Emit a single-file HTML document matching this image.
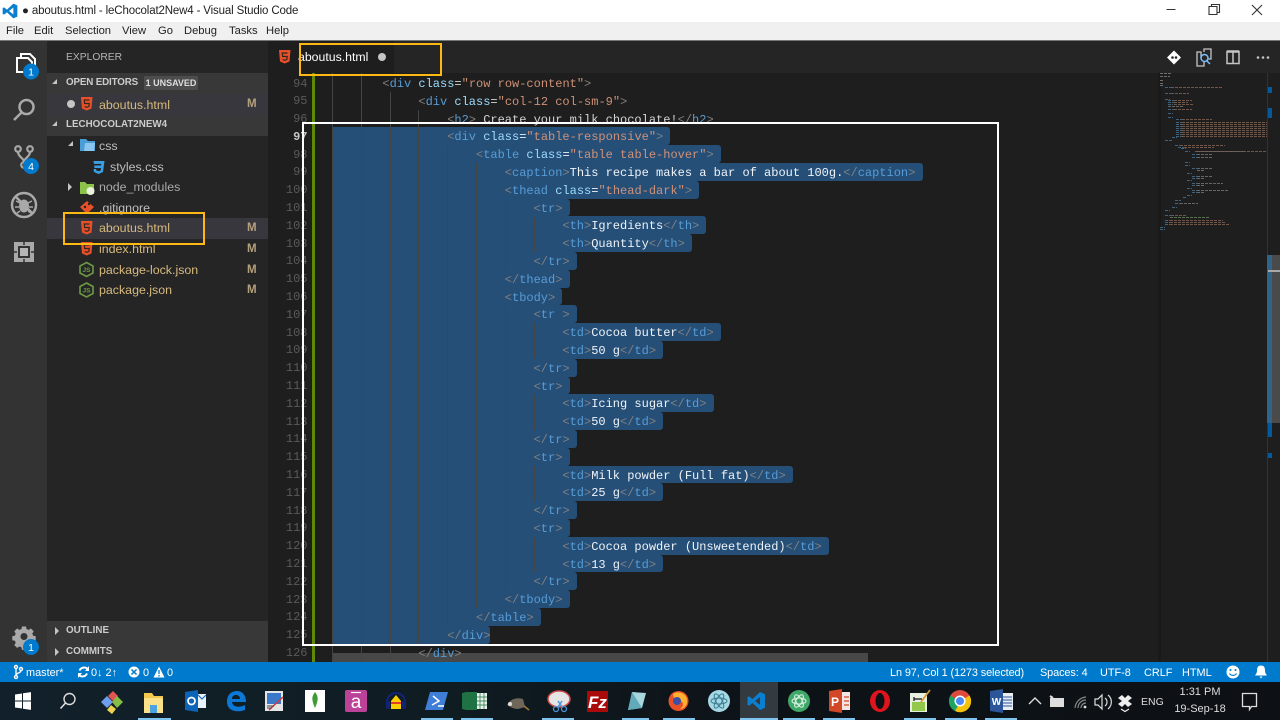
<!DOCTYPE html>
<html lang="en"><head><meta charset="utf-8"><title>aboutus.html - leChocolat2New4 - Visual Studio Code</title>
<style>
html,body{margin:0;padding:0;width:1280px;height:720px;overflow:hidden;background:#1e1e1e}
body{position:relative;font-family:"Liberation Sans",sans-serif}
.a{position:absolute;white-space:pre}
.m{top:24px;font-size:11.2px;color:#222;line-height:14px}
.h{left:47px;width:221px;height:20.5px;background:#383838}
.ht{font-size:9.8px;font-weight:bold;color:#ccc;line-height:14px}
.f{font-size:12.4px;line-height:16px;color:#d7ba7d}
.n{color:#c0c0c0}
.M{left:247px;font-size:11.5px;font-weight:bold;color:#b5a07c;line-height:14px}
.sb{top:666px;font-size:10.9px;color:#fff;line-height:14px}
#code{position:absolute;left:332px;top:74.1px;font:12px/20.6px "Liberation Mono",monospace;color:#d4d4d4}
.l{height:17.8px;white-space:pre;width:fit-content}
.s{background:#264f78;padding-right:7.2px;border-radius:0 3px 3px 0;color:#eef3f8}
.i3{padding-left:86.4px}.i4{padding-left:115.2px}.i5{padding-left:144px}.i6{padding-left:172.8px}.i7{padding-left:201.6px}.i8{padding-left:230.4px}
#code b,#code i,#code em,#code u{font-weight:normal;font-style:normal;text-decoration:none}
#code b{color:#808080}#code i{color:#569cd6}#code em{color:#9cdcfe}#code u{color:#ce9178}
#nums{position:absolute;left:268px;top:75.5px;width:39.5px;text-align:right;font:12px/17.8px "Liberation Mono",monospace;color:#5a5a5a}
.g{position:absolute;width:1px;background:#444}
</style></head><body>

<!-- title + menu -->
<div class="a" style="left:0;top:0;width:1280px;height:22px;background:#fff"></div>
<div class="a" style="left:0;top:22px;width:1280px;height:18px;background:#f0f0f0"></div>
<div class="a" style="left:0;top:40px;width:1280px;height:1px;background:#777"></div>
<svg class="a" style="left:2px;top:3px" width="16" height="16" viewBox="0 0 24 24"><path d="M17 1 7.500 10 3 6.500 1 7.500v9L3 17.500 7.500 14 17 23l6-2.500V3.500Z" fill="#0a7fd0"/><path d="M17 7 10.500 12 17 17Z" fill="#fff"/></svg>
<div class="a" style="left:22px;top:4px;font-size:11.5px;letter-spacing:-.15px;line-height:14px;color:#222">● aboutus.html - leChocolat2New4 - Visual Studio Code</div>
<div class="a m" style="left:6px">File</div><div class="a m" style="left:34px">Edit</div><div class="a m" style="left:65px">Selection</div><div class="a m" style="left:122px">View</div><div class="a m" style="left:158px">Go</div><div class="a m" style="left:184px">Debug</div><div class="a m" style="left:229px">Tasks</div><div class="a m" style="left:266px">Help</div>
<svg class="a" style="left:1160px;top:0" width="120" height="22" fill="none" stroke="#333" stroke-width="1"><path d="M6.500 9.500h9"/><path d="M49 6.500h8v8h-8zM51.500 6.500v-2h8v8h-2.500" stroke-width="1.100"/><path d="M92 5l10 10M102 5 92 15" stroke-width="1.100"/></svg>

<!-- activity bar -->
<div class="a" style="left:0;top:41px;width:47px;height:621px;background:#333"></div>
<svg class="a" style="left:0;top:41px" width="47" height="621" fill="none">
<g stroke="#fff" stroke-width="2"><path d="M17 17h11l4 4v10H17z" fill="#333"/><path d="M21 17v-4h9l5 5v12h-3"/></g>
<circle cx="31" cy="30.500" r="8" fill="#007acc"/><text x="31" y="34.500" font-family="Liberation Sans" font-size="10.500" fill="#fff" text-anchor="middle">1</text>
<g stroke="#a9a9a9" stroke-width="2.500"><circle cx="26.500" cy="66" r="7"/><path d="M21.500 71.500 14 79"/></g>
<g stroke="#a9a9a9" stroke-width="2.200"><circle cx="18" cy="108" r="2.800"/><circle cx="30" cy="108" r="2.800"/><circle cx="24" cy="124" r="2.800"/><path d="M18 111c0 5 6 6 6 10M30 111c0 5-6 6-6 10"/></g>
<circle cx="31" cy="125" r="8" fill="#007acc"/><text x="31" y="129" font-family="Liberation Sans" font-size="10.500" fill="#fff" text-anchor="middle">4</text>
<g stroke="#a9a9a9"><circle cx="24" cy="164" r="12" stroke-width="2.500"/><path d="M15.500 155.500 32.500 172.500" stroke-width="2.500"/><ellipse cx="24" cy="165" rx="5" ry="6.500" fill="#a9a9a9" stroke="none"/><path d="M16 160l4 2M32 160l-4 2M15 166h4M33 166h-4M17 172l3-2M31 172l-3-2" stroke-width="1.500"/></g>
<rect x="14" y="201" width="20" height="20" fill="#a9a9a9"/><rect x="18" y="205" width="12" height="12" fill="#333"/><rect x="20" y="207" width="8" height="8" fill="#b5b5b5"/><path d="M24 201v3M24 218v3M14 211h3M31 211h3" stroke="#333" stroke-width="1.500"/>
<g fill="#a9a9a9"><path d="M22 585.500h4l.6 2.600 2 .8 2.300-1.400 2.800 2.800-1.400 2.300.8 2 2.600.6v4l-2.600.6-.8 2 1.400 2.300-2.800 2.800-2.300-1.400-2 .8-.6 2.600h-4l-.6-2.600-2-.8-2.300 1.400-2.800-2.800 1.400-2.300-.8-2-2.600-.6v-4l2.600-.6.8-2-1.400-2.300 2.800-2.800 2.300 1.400 2-.8z"/></g><circle cx="24" cy="595.500" r="3.500" fill="#333"/>
<circle cx="31" cy="606" r="8" fill="#007acc"/><text x="31" y="610" font-family="Liberation Sans" font-size="10.500" fill="#fff" text-anchor="middle">1</text>
</svg>

<!-- sidebar -->
<div class="a" style="left:47px;top:41px;width:221px;height:621px;background:#252526"></div>
<div class="a" style="left:66px;top:51px;font-size:10.300px;line-height:14px;color:#b4b4b4">EXPLORER</div>
<div class="a h" style="top:73px"></div>
<div class="a ht" style="left:66px;top:76px;letter-spacing:-.15px">OPEN EDITORS</div>
<div class="a" style="left:144px;top:76px;width:54px;height:14px;background:#4d4d4d;border-radius:1px;color:#ddd;font-size:9px;font-weight:bold;line-height:14px;text-align:center">1 UNSAVED</div>
<div class="a" style="left:47px;top:94px;width:221px;height:20.500px;background:#37373d"></div>
<div class="a" style="left:67px;top:100px;width:8px;height:8px;border-radius:4px;background:#c5c5c5"></div>
<div class="a f" style="left:99px;top:96.500px">aboutus.html</div><div class="a M" style="top:97px">M</div>
<div class="a h" style="top:115px"></div>
<div class="a ht" style="left:66px;top:118px">LECHOCOLAT2NEW4</div>
<div class="a" style="left:47px;top:217.500px;width:221px;height:21px;background:#37373d"></div>
<div class="a f n" style="left:99px;top:137.500px;color:#bdbdbd">css</div>
<div class="a f n" style="left:110px;top:158.500px;color:#bdbdbd">styles.css</div>
<div class="a f n" style="left:99px;top:179px;color:#a9a9a9">node_modules</div>
<div class="a f n" style="left:99px;top:199.500px;color:#bdbdbd">.gitignore</div>
<div class="a f" style="left:99px;top:220px">aboutus.html</div><div class="a M" style="top:221px">M</div>
<div class="a f" style="left:99px;top:241px">index.html</div><div class="a M" style="top:242px">M</div>
<div class="a f" style="left:99px;top:261.500px">package-lock.json</div><div class="a M" style="top:262.500px">M</div>
<div class="a f" style="left:99px;top:282px">package.json</div><div class="a M" style="top:283px">M</div>
<div class="a h" style="top:620.500px"></div><div class="a h" style="top:641px"></div>
<div class="a ht" style="left:66px;top:624px">OUTLINE</div>
<div class="a ht" style="left:66px;top:645px">COMMITS</div>
<svg class="a" style="left:47px;top:41px" width="221" height="621">
<defs><g id="h5"><path d="M0 0h11.500l-1 11.500L5.750 13.500 1 11.500z" fill="#e8502a"/><path d="M8.500 3H3.300l.3 3.500h4.600l-.3 3-2.150.8-2.150-.8" fill="none" stroke="#33261f" stroke-width="1.200"/></g>
<g id="njs"><path d="M6.500 0 13 3.500v7L6.500 14 0 10.500v-7z" fill="none" stroke="#6d9b44" stroke-width="1.600"/><text x="6.500" y="9.500" font-family="Liberation Sans" font-size="6.500" font-weight="bold" fill="#6d9b44" text-anchor="middle">JS</text></g></defs>
<path d="M10 38l-5 5h5zM10 80l-5 5h5zM26 100l-5 5h5z" fill="#c5c5c5"/>
<path d="M21 142l4 4-4 4z" fill="#c5c5c5"/>
<path d="M8 586l4 4-4 4zM8 607l4 4-4 4z" fill="#c5c5c5"/>
<use href="#h5" x="34" y="56"/>
<use href="#h5" x="34" y="180"/><use href="#h5" x="34" y="201"/>
<use href="#njs" x="33" y="221.500"/><use href="#njs" x="33" y="242"/>
<path d="M33 98h6l2 2h7v10H33z" fill="#4a9ed8"/><path d="M38 102h10l-1 8H37z" fill="#8cc6ee"/>
<path d="M46.500 120h11l-1.500 11-4.500 2-4.500-2-.4-3h2.500l.2 1.500 2.200.7 2.200-.7.300-2.500H47.500l-.3-2.500h6.800l.3-1.600h-7.400z" fill="#39a0e5"/>
<path d="M33 141h5l2 2h7v10H33z" fill="#8bc34a"/><circle cx="43.500" cy="150" r="4" fill="#e8f2dc"/>
<path d="M33 166l7-6 7 6-7 7z" fill="#e8502a"/><circle cx="38" cy="166" r="1.200" fill="#252526"/><circle cx="42" cy="163" r="1.200" fill="#252526"/>
</svg>

<!-- tabs -->
<div class="a" style="left:268px;top:41px;width:1012px;height:32px;background:#252526"></div>
<div class="a" style="left:268px;top:41px;width:126px;height:32px;background:#1e1e1e"></div>
<svg class="a" style="left:279px;top:50px" width="12" height="14"><use href="#h5"/></svg>
<div class="a" style="left:298px;top:50px;font-size:12.300px;line-height:15px;color:#fff">aboutus.html</div>
<div class="a" style="left:378px;top:53px;width:8px;height:8px;border-radius:4px;background:#c5c5c5"></div>
<svg class="a" style="left:1160px;top:41px" width="120" height="32" fill="none">
<path d="M14 9.500l7 7-7 7-7-7z" fill="#fff"/><circle cx="12.500" cy="16.500" r="1.300" fill="#252526"/><circle cx="16" cy="16.500" r="1.300" fill="#252526"/>
<g stroke="#c5c5c5" stroke-width="1.300"><path d="M41 17v-6h-4v14h7v-4"/><path d="M44 11V8h7v10h-3"/></g><circle cx="44.500" cy="17" r="3.500" stroke="#75beff" stroke-width="1.500"/><path d="M47 20l3 3" stroke="#75beff" stroke-width="1.500"/>
<path d="M67 10.500h12v12H67zM73 10.500v12" stroke="#c5c5c5" stroke-width="1.500"/><path d="M67 10.500h12" stroke="#c5c5c5" stroke-width="2.500"/>
<circle cx="98" cy="16.500" r="1.300" fill="#c5c5c5"/><circle cx="103" cy="16.500" r="1.300" fill="#c5c5c5"/><circle cx="108" cy="16.500" r="1.300" fill="#c5c5c5"/>
</svg>

<!-- editor -->
<div class="a" style="left:312px;top:73px;width:3px;height:589px;background:#5f8a06"></div>
<div id="nums">94<br>95<br>96<br><span style="color:#c6c6c6;font-weight:bold">97</span><br>98<br>99<br>100<br>101<br>102<br>103<br>104<br>105<br>106<br>107<br>108<br>109<br>110<br>111<br>112<br>113<br>114<br>115<br>116<br>117<br>118<br>119<br>120<br>121<br>122<br>123<br>124<br>125<br>126</div>

<div class="a" style="left:332px;top:653px;width:536px;height:9px;background:#484848"></div>

<div id="code">
<div class="l" style="padding-left:50.400px"><b>&lt;</b><i>div</i> <em>class</em>=<u>"row row-content"</u><b>&gt;</b></div>
<div class="l i3"><b>&lt;</b><i>div</i> <em>class</em>=<u>"col-12 col-sm-9"</u><b>&gt;</b></div>
<div class="l i4"><b>&lt;</b><i>h2</i><b>&gt;</b> Create your milk chocolate!<b>&lt;/</b><i>h2</i><b>&gt;</b></div>
<div class="l s i4"><b>&lt;</b><i>div</i> <em>class</em>=<u>"table-responsive"</u><b>&gt;</b></div>
<div class="l s i5"><b>&lt;</b><i>table</i> <em>class</em>=<u>"table table-hover"</u><b>&gt;</b></div>
<div class="l s i6"><b>&lt;</b><i>caption</i><b>&gt;</b>This recipe makes a bar of about 100g.<b>&lt;/</b><i>caption</i><b>&gt;</b></div>
<div class="l s i6"><b>&lt;</b><i>thead</i> <em>class</em>=<u>"thead-dark"</u><b>&gt;</b></div>
<div class="l s i7"><b>&lt;</b><i>tr</i><b>&gt;</b></div>
<div class="l s i8"><b>&lt;</b><i>th</i><b>&gt;</b>Igredients<b>&lt;/</b><i>th</i><b>&gt;</b></div>
<div class="l s i8"><b>&lt;</b><i>th</i><b>&gt;</b>Quantity<b>&lt;/</b><i>th</i><b>&gt;</b></div>
<div class="l s i7"><b>&lt;/</b><i>tr</i><b>&gt;</b></div>
<div class="l s i6"><b>&lt;/</b><i>thead</i><b>&gt;</b></div>
<div class="l s i6"><b>&lt;</b><i>tbody</i><b>&gt;</b></div>
<div class="l s i7"><b>&lt;</b><i>tr</i> <b>&gt;</b></div>
<div class="l s i8"><b>&lt;</b><i>td</i><b>&gt;</b>Cocoa butter<b>&lt;/</b><i>td</i><b>&gt;</b></div>
<div class="l s i8"><b>&lt;</b><i>td</i><b>&gt;</b>50 g<b>&lt;/</b><i>td</i><b>&gt;</b></div>
<div class="l s i7"><b>&lt;/</b><i>tr</i><b>&gt;</b></div>
<div class="l s i7"><b>&lt;</b><i>tr</i><b>&gt;</b></div>
<div class="l s i8"><b>&lt;</b><i>td</i><b>&gt;</b>Icing sugar<b>&lt;/</b><i>td</i><b>&gt;</b></div>
<div class="l s i8"><b>&lt;</b><i>td</i><b>&gt;</b>50 g<b>&lt;/</b><i>td</i><b>&gt;</b></div>
<div class="l s i7"><b>&lt;/</b><i>tr</i><b>&gt;</b></div>
<div class="l s i7"><b>&lt;</b><i>tr</i><b>&gt;</b></div>
<div class="l s i8"><b>&lt;</b><i>td</i><b>&gt;</b>Milk powder (Full fat)<b>&lt;/</b><i>td</i><b>&gt;</b></div>
<div class="l s i8"><b>&lt;</b><i>td</i><b>&gt;</b>25 g<b>&lt;/</b><i>td</i><b>&gt;</b></div>
<div class="l s i7"><b>&lt;/</b><i>tr</i><b>&gt;</b></div>
<div class="l s i7"><b>&lt;</b><i>tr</i><b>&gt;</b></div>
<div class="l s i8"><b>&lt;</b><i>td</i><b>&gt;</b>Cocoa powder (Unsweetended)<b>&lt;/</b><i>td</i><b>&gt;</b></div>
<div class="l s i8"><b>&lt;</b><i>td</i><b>&gt;</b>13 g<b>&lt;/</b><i>td</i><b>&gt;</b></div>
<div class="l s i7"><b>&lt;/</b><i>tr</i><b>&gt;</b></div>
<div class="l s i6"><b>&lt;/</b><i>tbody</i><b>&gt;</b></div>
<div class="l s i5"><b>&lt;/</b><i>table</i><b>&gt;</b></div>
<div class="l s i4" style="padding-right:0"><b>&lt;/</b><i>div</i><b>&gt;</b></div>
<div class="l i3"><b>&lt;/</b><i>div</i><b>&gt;</b></div>
</div>

<!-- indent guides -->
<div class="g" style="left:332px;top:73px;height:589px"></div>
<div class="g" style="left:361px;top:73px;height:589px"></div>
<div class="g" style="left:390px;top:92px;height:570px"></div>
<div class="g" style="left:418px;top:110px;height:535px"></div>
<div class="g" style="left:447px;top:145.300px;height:480.600px"></div>
<div class="g" style="left:476px;top:163px;height:445px"></div>
<div class="g" style="left:505px;top:198.700px;height:71.200px"></div>
<div class="g" style="left:505px;top:305.500px;height:284.500px"></div>
<div class="g" style="left:534px;top:216.500px;height:35.600px"></div>
<div class="g" style="left:534px;top:323.300px;height:35.600px"></div>
<div class="g" style="left:534px;top:394.500px;height:35.600px"></div>
<div class="g" style="left:534px;top:465.700px;height:35.600px"></div>
<div class="g" style="left:534px;top:536.900px;height:35.600px"></div>

<!-- minimap -->
<div class="a" style="left:1158px;top:73px;width:3px;height:589px;background:#191919"></div>
<svg class="a" style="left:1160px;top:73px" width="107" height="160" fill="none" stroke-width="1" opacity=".75" stroke-dasharray="3 1">
<path stroke="#8a8a8a" d="M0 .5h12M0 3.500h10M0 7.500h4M0 10.500h3M0 12.500h4"/>
<path stroke="#4a7ba0" d="M5 14.500h6M5 20.500h6M5 26.500h5M8 27.500h6M8 29.500h6M8 31.500h5M8 36.500h6M8 40.500h5M8 44.500h5M16 46.500h6M16 49.500h6M16 51.500h6M16 53.500h6M16 55.500h6M16 57.500h6M16 59.500h6M16 61.500h6M16 63.500h6M12 64.500h5M5 67.500h8M15 72.500h5M18 74.500h6M21 75.500h5M25 78.500h5M32 81.500h5M32 84.500h5M25 89.500h5M25 92.500h5M32 95.500h5M27 100.500h5M32 103.500h5M32 105.500h5M27 107.500h5M32 110.500h5M32 112.500h5M27 115.500h5M32 117.500h5M32 119.500h5M27 122.500h5M23 124.500h4M15 127.500h6M15 130.500h5M12 134.500h5M5 137.500h5M5 142.500h6M10 144.500h4M5 147.500h5M5 149.500h5M5 151.500h5M0 154.500h5M0 156.500h5"/>
<path stroke="#8d6a58" d="M11 14.500h52M11 20.500h18M14 27.500h18M14 29.500h14M14 31.500h20M14 36.500h18M22 46.500h30M22 49.500h85M22 51.500h85M22 53.500h85M22 55.500h85M22 57.500h85M22 59.500h85M22 61.500h85M22 63.500h85M20 72.500h45M24 74.500h30M35 78.500h75M11 142.500h15"/>
<path stroke="#7d7d7d" d="M8 33.500h15M30 75.500h0M37 78.500h48M37 81.500h16M37 84.500h16M37 95.500h16M37 97.500h8M37 103.500h16M37 105.500h8M37 110.500h26M37 112.500h8M37 117.500h31M37 119.500h8M20 130.500h18"/>
<path stroke="#6a8f5a" d="M10 144.500h40"/>
<path stroke="#8d6a58" d="M10 147.500h53M10 149.500h56M10 151.500h60"/>
</svg>
<div class="a" style="left:1267px;top:73px;width:1px;height:589px;background:#333"></div>
<div class="a" style="left:1268px;top:255px;width:12px;height:168px;background:#4a4a4a"></div>
<div class="a" style="left:1267px;top:255px;width:5px;height:168px;background:#31648a"></div>
<div class="a" style="left:1268px;top:270px;width:12px;height:2px;background:#a8a8a8"></div>
<div class="a" style="left:1268px;top:87px;width:4px;height:6px;background:#04599a"></div>
<div class="a" style="left:1268px;top:108px;width:4px;height:10px;background:#04599a"></div>
<div class="a" style="left:1268px;top:423px;width:4px;height:14px;background:#04599a"></div>
<div class="a" style="left:1268px;top:453px;width:4px;height:5px;background:#04599a"></div>

<!-- annotation rectangles -->
<div class="a" style="left:302px;top:122px;width:693px;height:520px;border:2px solid #fff"></div>
<div class="a" style="left:299px;top:43px;width:138.500px;height:29px;border:2px solid #fdb913"></div>
<div class="a" style="left:63px;top:212px;width:138px;height:28.500px;border:2px solid #fdb913"></div>

<!-- status bar -->
<div class="a" style="left:0;top:662px;width:1280px;height:20px;background:#007acc"></div>
<svg class="a" style="left:0;top:662px" width="1280" height="20" fill="none" stroke="#fff">
<g stroke-width="1.400"><circle cx="16" cy="5" r="1.500"/><circle cx="16" cy="15" r="1.500"/><circle cx="21" cy="7" r="1.500"/><path d="M16 6.500v7M21 8.500c0 3-5 2-5 5"/></g>
<path d="M88 7.500a5 5 0 0 0-8.500 1M78.500 12.500a5 5 0 0 0 8.500-1" stroke-width="2"/><path d="M89 4v5h-4zM78 16v-5h4z" fill="#fff" stroke="none"/>
<circle cx="134" cy="10" r="5.500" fill="#fff" stroke="none"/><path d="M131.500 7.500l5 5M136.500 7.500l-5 5" stroke="#007acc" stroke-width="1.500"/>
<path d="M159 4.500l5.500 11h-11z" fill="#fff" stroke="none"/><path d="M159 8v4M159 13v1.500" stroke="#007acc" stroke-width="1.300"/>
<circle cx="1233" cy="10" r="6.500" fill="#fff" stroke="none"/><circle cx="1230.500" cy="8" r="1" fill="#007acc" stroke="none"/><circle cx="1235.500" cy="8" r="1" fill="#007acc" stroke="none"/><path d="M1229.500 11.500c1.500 2.500 5.500 2.500 7 0" stroke="#007acc" stroke-width="1.200"/>
<path d="M1261 3.500c-3 0-4 2-4 5 0 3-1.500 4-2 5h12c-.5-1-2-2-2-5 0-3-1-5-4-5zM1259.500 14.500h3l-1.500 2z" fill="#fff" stroke="none"/>
</svg>
<div class="a sb" style="left:26px">master*</div>
<div class="a sb" style="left:91px">0↓ 2↑</div>
<div class="a sb" style="left:143px">0</div>
<div class="a sb" style="left:167px">0</div>
<div class="a sb" style="left:890px;letter-spacing:-.1px">Ln 97, Col 1 (1273 selected)</div>
<div class="a sb" style="left:1040px;letter-spacing:-.1px">Spaces: 4</div>
<div class="a sb" style="left:1100px">UTF-8</div>
<div class="a sb" style="left:1144px">CRLF</div>
<div class="a sb" style="left:1182px">HTML</div>

<!-- taskbar -->
<div class="a" style="left:0;top:682px;width:1280px;height:38px;background:linear-gradient(90deg,#11202a 0,#0f1c22 35%,#0d1217 60%,#0d1116 100%)"></div>
<div class="a" style="left:740px;top:682px;width:38px;height:38px;background:#333a40"></div>
<svg class="a" style="left:0;top:682px" width="1280" height="38" fill="none">
<g fill="#7fc4ee"><rect x="138" y="36" width="33" height="2"/><rect x="421" y="36" width="32" height="2"/><rect x="461" y="36" width="32" height="2"/><rect x="542" y="36" width="32" height="2"/><rect x="622" y="36" width="27" height="2"/><rect x="663" y="36" width="32" height="2"/><rect x="740" y="36" width="38" height="2"/><rect x="783" y="36" width="32" height="2"/><rect x="823" y="36" width="32" height="2"/><rect x="904" y="36" width="32" height="2"/><rect x="945" y="36" width="32" height="2"/><rect x="985" y="36" width="32" height="2"/></g>
<path d="M15 12.500l7-1v7h-7zM23 11.300l8-1.200v8.400h-8zM15 19.500h7v7l-7-1zM23 19.500h8v8.400l-8-1.200z" fill="#fff"/>
<circle cx="69.500" cy="17" r="5.500" stroke="#ddd" stroke-width="1.400"/><path d="M65.500 21l-5 5.500" stroke="#ddd" stroke-width="1.600"/>
<path d="M108 14l5-5 5 5-5 5z" fill="#e3564f"/><path d="M101 20l6-6 6 6-6 6z" fill="#6f9eee"/><path d="M117 14l6 6-6 6-5-6z" fill="#86bd44"/><path d="M111 23l5 4-4 5-5-4z" fill="#f0d24c"/>
<path d="M144 11h8l2 3h9v17h-19z" fill="#f2c84d"/><path d="M144 16h19v15h-19z" fill="#fbe08a"/><path d="M150 23h7v8h-7z" fill="#4da3e0"/>
<path d="M185 10l13-2v22l-13-2z" fill="#0b64b8"/><path d="M198 12h8v14h-8z" fill="#e8f2fa"/><circle cx="191.500" cy="19" r="3.500" stroke="#fff" stroke-width="1.700"/><path d="M198 13l4 4 4-4" stroke="#0b64b8"/>
<path d="M227 20c0-8 5-11 10-11 6 0 9 5 9 11h-14c.5 5 7 6 13 3v5c-8 3-18 1-18-8zm5-3h8c0-3-2-4-4-4s-4 1-4 4z" fill="#0a78d4"/>
<rect x="265" y="9" width="18" height="20" fill="#e5e5e5"/><rect x="267" y="11" width="14" height="11" fill="#3a78c9"/><path d="M269 28l14-13" stroke="#d23a3a" stroke-width="1.500"/><path d="M267 24h7M267 26h5" stroke="#444"/>
<rect x="305" y="8" width="20" height="22" fill="#fff"/><path d="M315 10c3 4 4 7 0 16-4-9-3-12 0-16z" fill="#3f9c35"/>
<rect x="345" y="8" width="22" height="22" rx="2" fill="#a8409f"/><rect x="345" y="8" width="22" height="22" rx="2" fill="#d8458e" opacity=".4"/><text x="356" y="26" font-family="Liberation Sans" font-size="19" fill="#fff" text-anchor="middle">a</text><path d="M351 10.500h10" stroke="#fff" stroke-width="1.200"/>
<path d="M387 20a9 9 0 0 1 18 0" stroke="#13237a" stroke-width="2"/><rect x="386" y="19" width="4" height="8" rx="2" fill="#13237a"/><rect x="402" y="19" width="4" height="8" rx="2" fill="#13237a"/><path d="M391 19l5-6 5 6v8h-10z" fill="#fccf00"/><path d="M391 21h10" stroke="#e23c2a" stroke-width="2"/>
<path d="M430 10h18l-5 18h-18z" fill="#3f7fd8"/><path d="M433 14l6 5-7 4M438 24h6" stroke="#fff" stroke-width="1.500"/>
<path d="M466 10h11v18h-11l-4-1V11z" fill="#1f7244"/><rect x="477" y="11" width="10" height="16" fill="#e6efe9"/><path d="M480 11v16M484 11v16M477 15h10M477 19h10M477 23h10" stroke="#1f7244" stroke-width=".7"/>
<path d="M507 23c3-6 10-8 16-6l2 8-7 2c-4 0-8-2-11-4z" fill="#6e6759"/><circle cx="510" cy="22" r="2" fill="#ddd"/><path d="M524 24l5 4" stroke="#a37a3b" stroke-width="1.500"/>
<ellipse cx="559" cy="17" rx="11" ry="8" fill="#e5e5e5" stroke="#cf4a4a" stroke-width="1.500"/><path d="M558 19l4 6M562 19l-4 6" stroke="#4a94d8" stroke-width="1.500"/><circle cx="556" cy="27" r="2.500" stroke="#4a94d8" stroke-width="1.300"/><circle cx="564" cy="27" r="2.500" stroke="#4a94d8" stroke-width="1.300"/>
<rect x="587" y="9" width="21" height="21" fill="#aa0a0a"/><text x="597.500" y="26" font-family="Liberation Sans" font-size="17" font-weight="bold" font-style="italic" fill="#fff" text-anchor="middle">Fz</text>
<path d="M632 10l14 1-4 15-14 2z" fill="#a7d6df"/><path d="M632 10l-4 18 14-2z" fill="#62a9ba"/>
<circle cx="678.500" cy="19" r="10" fill="#e8502a"/><path d="M673 12c4-3 12-2 14 5 1 5-2 10-7 10 3-2 4-5 2-7-2-2-6-1-6-4-2 1-3-2-3-4z" fill="#ffb02e"/><circle cx="677" cy="19" r="4" fill="#3b4fa5"/>
<circle cx="719" cy="19" r="11" fill="#a5d8e4"/><g stroke="#3a7c90" stroke-width="1"><ellipse cx="719" cy="19" rx="8" ry="3"/><ellipse cx="719" cy="19" rx="8" ry="3" transform="rotate(60 719 19)"/><ellipse cx="719" cy="19" rx="8" ry="3" transform="rotate(120 719 19)"/></g>
<path d="M753 10l-7.500 7-3.500-2.700-1.500.8v7.800l1.500.8 3.500-2.700 7.500 7 5-2.200V12.200z M753 15v8l-5-4z" fill="#0a7fd0" fill-rule="evenodd" transform="translate(7,0)"/>
<circle cx="799" cy="19" r="11" fill="#3fa868"/><g stroke="#d8efe0" stroke-width="1.100"><ellipse cx="799" cy="19" rx="7" ry="3"/><ellipse cx="799" cy="19" rx="7" ry="3" transform="rotate(60 799 19)"/><ellipse cx="799" cy="19" rx="7" ry="3" transform="rotate(120 799 19)"/></g>
<path d="M829 9l13-2v24l-13-2z" fill="#d24726"/><rect x="842" y="10" width="8" height="18" fill="#f3e6e2"/><text x="835" y="24" font-family="Liberation Sans" font-size="12" font-weight="bold" fill="#fff" text-anchor="middle">P</text><path d="M844 15h5M844 19h5M844 23h5" stroke="#d24726" stroke-width="1.200"/>
<ellipse cx="880" cy="19" rx="10" ry="11" fill="#e0141c"/><ellipse cx="880" cy="19" rx="4.500" ry="8" fill="#0d1116"/>
<path d="M910 11h17v19h-17z" fill="#e7efe0"/><path d="M912 20h13v9h-13z" fill="#93c94a"/><path d="M914 19v-4M914 17h8" stroke="#333" stroke-width="1.500"/><path d="M921 20l9-12" stroke="#d39a32" stroke-width="1.700"/>
<circle cx="960" cy="19" r="11" fill="#dd4b3e"/><path d="M960 19l9.500-5.500A11 11 0 0 1 955 29z" fill="#f4c20d"/><path d="M950.500 13.500A11 11 0 0 0 955 29l5-9z" fill="#1da462"/><circle cx="960" cy="19" r="4.800" fill="#4a8af4" stroke="#fff" stroke-width="1.500"/>
<rect x="1002" y="11" width="11" height="17" fill="#e8edf6"/><path d="M1003 15h9M1003 18h9M1003 21h9M1003 24h9" stroke="#2b579a" stroke-width="1"/><path d="M990 9l13-2v24l-13-2z" fill="#2b579a"/><text x="996.500" y="23" font-family="Liberation Sans" font-size="10" font-weight="bold" fill="#fff" text-anchor="middle">W</text>
<path d="M1029 22l6-6 6 6" stroke="#ddd" stroke-width="1.400"/>
<rect x="1050" y="16" width="14" height="9" fill="#ddd"/><path d="M1050 14l3 2" stroke="#ddd" stroke-width="2"/>
<path d="M1075 26a12 12 0 0 1 11-11M1078 26a8 8 0 0 1 8-8M1081 26a5 5 0 0 1 5-5" stroke="#888" stroke-width="1.200"/><circle cx="1085" cy="25" r="1.400" fill="#ddd"/>
<path d="M1095 17h3l4-4v14l-4-4h-3z" stroke="#ddd" stroke-width="1.200"/><path d="M1105 16a5 5 0 0 1 0 8M1108 13a9 9 0 0 1 0 14" stroke="#ddd" stroke-width="1.200"/>
<path d="M1122 13l-4 3 4 3-4 3 4 3 3-3 3 3 4-3-4-3 4-3-4-3-3 3z" fill="#eee"/><path d="M1121 27l4 2.500 4-2.500" stroke="#eee" stroke-width="1.200"/>
<path d="M1242.500 11.500h14v13h-5l-2 3v-3h-7z" stroke="#ddd" stroke-width="1.300"/>
</svg>
<div class="a" style="left:1141px;top:695px;font-size:10.500px;line-height:14px;color:#ddd">ENG</div>
<div class="a" style="left:1175px;top:685px;width:50px;text-align:center;font-size:11px;line-height:14px;color:#ddd">1:31 PM</div>
<div class="a" style="left:1170px;top:702px;width:60px;text-align:center;font-size:11px;line-height:14px;color:#ddd">19-Sep-18</div>
</body></html>
